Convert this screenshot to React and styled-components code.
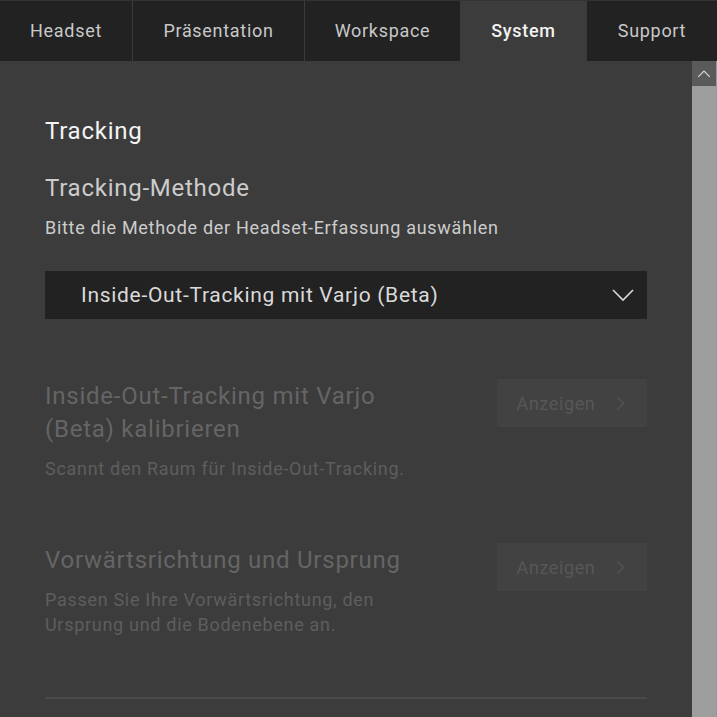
import React from 'react';
import styled, { createGlobalStyle } from 'styled-components';

const GlobalStyle = createGlobalStyle`
  html, body {
    margin: 0;
    padding: 0;
    background: #3c3c3c;
    overflow: hidden;
  }
  * { box-sizing: border-box; }
`;

const tabs = ['Headset', 'Präsentation', 'Workspace', 'System', 'Support'];
const tabWidths = [133, 172, 156, 126, 130];

const sections = [
  {
    title: 'Inside-Out-Tracking mit Varjo (Beta) kalibrieren',
    text: 'Scannt den Raum für Inside-Out-Tracking.',
  },
  {
    title: 'Vorwärtsrichtung und Ursprung',
    text: 'Passen Sie Ihre Vorwärtsrichtung, den Ursprung und die Bodenebene an.',
  },
];

const Chevron = ({ dir = 'down', size = 22, color = '#d0d0d0' }) => {
  const d = {
    down: 'M1 6 L11 16 L21 6',
    right: 'M7 3 L15 11 L7 19',
    up: 'M3 15 L11 7 L19 15',
  }[dir];
  return (
    <svg width={size} height={size} viewBox="0 0 22 22" fill="none">
      <path d={d} stroke={color} strokeWidth="1.6" />
    </svg>
  );
};

const App = () => {
  return (
    <S.Wrap>
      <GlobalStyle />
      <S.TabBar>
        {tabs.map((t, i) => (
          <S.Tab key={t} $active={t === 'System'} style={{ width: tabWidths[i] }}>
            {t}
          </S.Tab>
        ))}
      </S.TabBar>
      <S.Body>
        <S.Content>
          <S.Heading>Tracking</S.Heading>
          <S.SubHeading>Tracking-Methode</S.SubHeading>
          <S.Hint>Bitte die Methode der Headset-Erfassung auswählen</S.Hint>
          <S.Select>
            <span>Inside-Out-Tracking mit Varjo (Beta)</span>
            <Chevron dir="down" size={22} color="#d8d8d8" />
          </S.Select>
          {sections.map((s) => (
            <S.Row key={s.title}>
              <S.RowText>
                <S.RowTitle>{s.title}</S.RowTitle>
                <S.RowDesc>{s.text}</S.RowDesc>
              </S.RowText>
              <S.ShowButton disabled>
                Anzeigen
                <Chevron dir="right" size={17} color="#555555" />
              </S.ShowButton>
            </S.Row>
          ))}
          <S.Divider />
        </S.Content>
        <S.ScrollBar>
          <S.ScrollButton>
            <Chevron dir="up" size={16} color="#d8d8d8" />
          </S.ScrollButton>
          <S.ScrollThumb />
        </S.ScrollBar>
      </S.Body>
    </S.Wrap>
  );
};

const S = {
  Wrap: styled.div`
    width: 717px;
    height: 717px;
    display: flex;
    flex-direction: column;
    font-family: Roboto, "Liberation Sans", sans-serif;
    background: #3c3c3c;
  `,
  TabBar: styled.div`
    display: flex;
    height: 61px;
    background: #222222;
    border-top: 1px solid #333333;
  `,
  Tab: styled.div`
    display: flex;
    align-items: center;
    justify-content: center;
    font-size: 18px;
    letter-spacing: 0.7px;
    font-weight: ${(p) => (p.$active ? 500 : 400)};
    color: ${(p) => (p.$active ? '#f2f2f2' : '#c8c8c8')};
    background: ${(p) => (p.$active ? '#3c3c3c' : '#222222')};
    border-right: 1px solid #3a3a3a;
    padding-bottom: 2px;
    &:last-child { border-right: none; }
  `,
  Body: styled.div`
    flex: 1;
    display: flex;
    min-height: 0;
  `,
  Content: styled.div`
    flex: 1;
    padding: 55px 45px 0 45px;
    overflow: hidden;
  `,
  Heading: styled.div`
    font-size: 24px;
    letter-spacing: 0.75px;
    color: #f4f4f4;
    line-height: 30px;
  `,
  SubHeading: styled.div`
    margin-top: 27px;
    font-size: 24px;
    letter-spacing: 0.75px;
    color: #cccccc;
    line-height: 30px;
  `,
  Hint: styled.div`
    margin-top: 13px;
    font-size: 18px;
    letter-spacing: 0.7px;
    color: #cccccc;
    line-height: 24px;
  `,
  Select: styled.div`
    margin-top: 31px;
    height: 48px;
    background: #222222;
    display: flex;
    align-items: center;
    justify-content: space-between;
    padding: 0 13px 0 36px;
    font-size: 21px;
    color: #dadada;
    letter-spacing: 0.7px;
  `,
  Row: styled.div`
    display: flex;
    justify-content: space-between;
    align-items: flex-start;
    margin-top: 60px;
    & + & { margin-top: 62px; }
  `,
  RowText: styled.div`
    width: 370px;
  `,
  RowTitle: styled.div`
    font-size: 24px;
    line-height: 33px;
    letter-spacing: 0.75px;
    color: #656565;
    padding-top: 1px;
  `,
  RowDesc: styled.div`
    margin-top: 10px;
    font-size: 18px;
    line-height: 25px;
    letter-spacing: 0.7px;
    color: #5e5e5e;
  `,
  ShowButton: styled.button`
    width: 150px;
    height: 48px;
    border: none;
    background: #424242;
    color: #575757;
    font-family: inherit;
    font-size: 18px;
    letter-spacing: 0.6px;
    display: flex;
    align-items: center;
    justify-content: center;
    gap: 17px;
    padding: 0 0 0 2px;
  `,
  Divider: styled.div`
    margin-top: 60px;
    height: 2px;
    background: #4a4a4a;
  `,
  ScrollBar: styled.div`
    width: 25px;
    display: flex;
    flex-direction: column;
    background: #9e9e9e;
    border-right: 1px solid #8a9aa8;
  `,
  ScrollButton: styled.div`
    height: 25px;
    background: #5a5a5a;
    display: flex;
    align-items: center;
    justify-content: center;
  `,
  ScrollThumb: styled.div`
    flex: 1;
    background: #9e9e9e;
  `,
};

export default App;
